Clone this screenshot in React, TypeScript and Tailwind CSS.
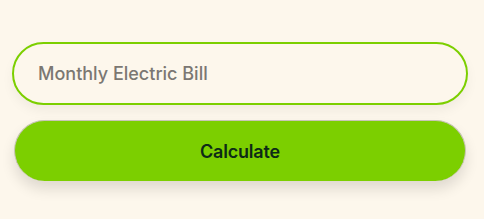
export default function App() {
  return (
    <div
      className="min-h-[219px] w-full bg-[#fdf7ec] pl-3 pr-4 pt-[42px]"
      style={{ fontFamily: "Inter, 'Noto Sans', sans-serif" }}
    >
      <div className="flex flex-col gap-[15px]">
        <input
          type="text"
          placeholder="Monthly Electric Bill"
          className="h-[63px] w-full rounded-full border-2 border-[#7ccf00] bg-[#fdf7ec] px-[24px] text-[18px] font-medium text-gray-800 shadow-[0_6px_12px_rgba(0,0,0,0.05)] outline-none placeholder:text-[#7b7772]"
        />
        <button className="mx-[2px] h-[61px] rounded-full border border-[#c9c4b8] border-b-0 bg-[#7ccf00] text-[18px] font-semibold tracking-[-0.2px] text-[#0d2a17] shadow-[0_8px_14px_rgba(0,0,0,0.12)]">
          Calculate
        </button>
      </div>
    </div>
  );
}
